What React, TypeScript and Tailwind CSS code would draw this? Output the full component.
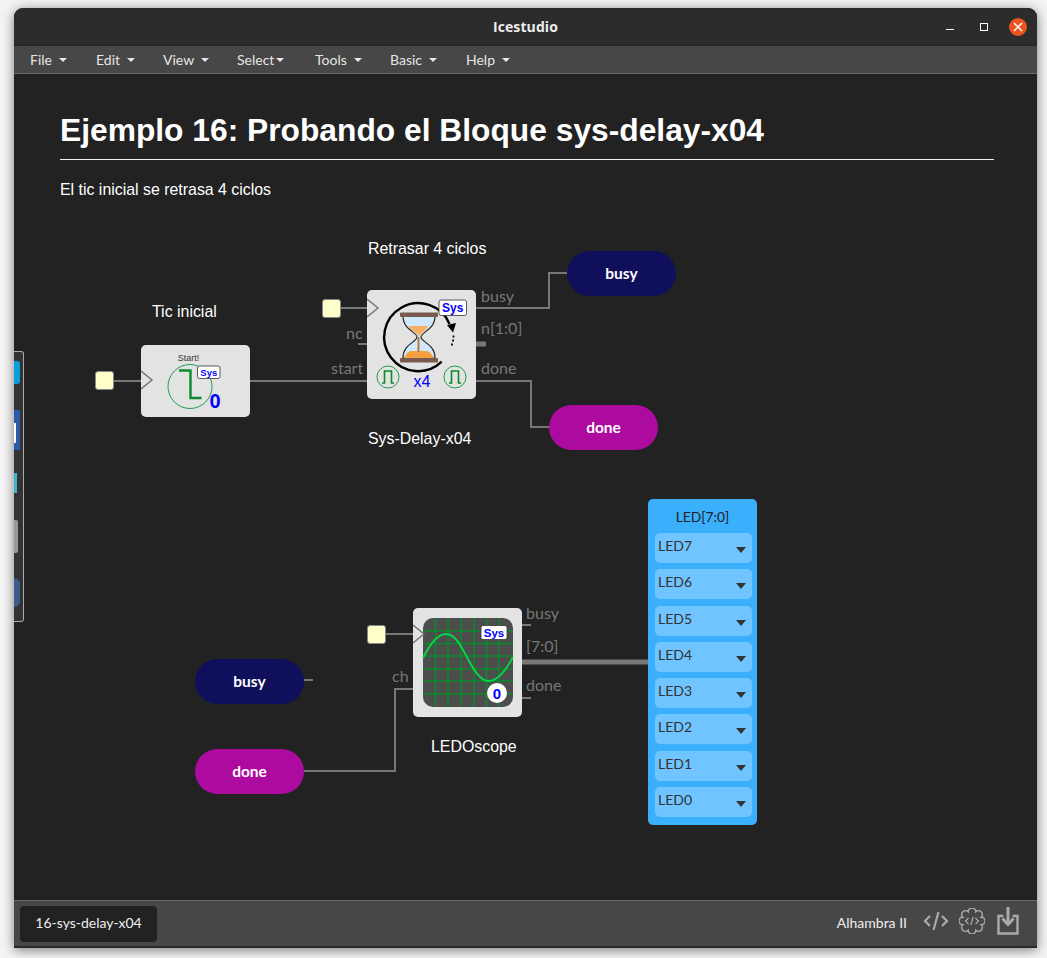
import React from "react";

const sans = "font-['Liberation_Sans',Arial,sans-serif]";
const lato = "font-['Lato',sans-serif]";

function Caret({ tight }: { tight?: boolean }) {
  return (
    <span
      className={`${tight ? "ml-[2px]" : "ml-[7px]"} inline-block w-0 h-0 border-l-[4px] border-r-[4px] border-t-[4px] border-l-transparent border-r-transparent border-t-[#e8e8e8]`}
    />
  );
}

function MenuItem({ label, tight, cls }: { label: string; tight?: boolean; cls: string }) {
  return (
    <div className={`flex items-center ${cls} text-[14px] text-[#e6e6e6]`}>
      <span>{label}</span>
      <Caret tight={tight} />
    </div>
  );
}

function Badge({ x, y, w, h, size }: { x: number; y: number; w: number; h: number; size: number }) {
  return (
    <g>
      <rect x={x} y={y} width={w} height={h} rx="2" fill="#fff" stroke="#333" strokeWidth="0.8" />
      <text x={x + w / 2} y={y + h / 2 + size * 0.36} textAnchor="middle" fontSize={size} fontWeight="700" fontFamily="Liberation Sans" fill="#0000ff">
        Sys
      </text>
    </g>
  );
}

function Pulse({ cx, cy }: { cx: number; cy: number }) {
  return (
    <g fill="none">
      <circle cx={cx} cy={cy} r="11" stroke="#1f9d4d" strokeWidth="1" fill="#e3e3e3" />
      <path d={`M${cx - 6} ${cy + 6}H${cx - 3.5}V${cy - 6}H${cx + 3.5}V${cy + 6}H${cx + 6}`} stroke="#0a8a2a" strokeWidth="1.6" />
    </g>
  );
}

function Clock({ x, y }: { x: number; y: number }) {
  return <path d={`M${x} ${y - 9}L${x + 11} ${y}L${x} ${y + 9}`} fill="none" stroke="#777" strokeWidth="1.5" />;
}

function DelayIcon() {
  return (
    <svg width="109" height="109" viewBox="367 290 109 109">
      <Clock x={367} y={308} />
      <path d="M441.700 361.700A34 34 0 1 1 449.500 324" fill="none" stroke="#000" strokeWidth="2.400" />
      <path d="M447 325L456 323L453 332.500Z" fill="#000" />
      <path d="M453.500 335.500v2M453 339.500v2M452 343.500v2" stroke="#000" strokeWidth="1.800" fill="none" />
      <path d="M403 316C403 330 417 332 417 337C417 342 403 344 403 358H435C435 344 421 342 421 337C421 332 435 330 435 316Z" fill="#cfe8fb" stroke="#222" strokeWidth="1.2" />
      <path d="M409 326H428C426 331 421 333 419 336C417 333 411 331 409 326Z" fill="#f8b060" />
      <path d="M404.500 358C405 355 408 352 410 351H427C430 352 433 355 433.500 358Z" fill="#f8a040" />
      <rect x="417.500" y="337" width="2" height="15" fill="#b97a35" />
      <rect x="400" y="312.500" width="38" height="4.500" rx="1" fill="#7a5a50" />
      <rect x="400" y="358" width="38" height="4.500" rx="1" fill="#7a5a50" />
      <Badge x={439} y={300} w={27.500} h={15.500} size={12} />
      <Pulse cx={388} cy={377} />
      <Pulse cx={455} cy={377} />
      <text x="422" y="386.500" textAnchor="middle" fontSize="16" fontFamily="Liberation Sans" fill="#0000ff">
        x4
      </text>
    </svg>
  );
}

function StartIcon() {
  return (
    <svg width="109" height="72" viewBox="141 345 109 72">
      <Clock x={141} y={380} />
      <text x="188.500" y="361" textAnchor="middle" fontSize="9" fontFamily="Liberation Sans" fill="#333">
        Start!
      </text>
      <circle cx="190" cy="386.500" r="22" fill="none" stroke="#1f9d4d" strokeWidth="1" />
      <path d="M179 370.500H190.500V398H201.500" fill="none" stroke="#0a8a2a" strokeWidth="2.400" />
      <Badge x={197.500} y={366} w={22.500} h={12.500} size={9.500} />
      <text x="215" y="407.500" textAnchor="middle" fontSize="20" fontWeight="700" fontFamily="Liberation Sans" fill="#0000ff">
        0
      </text>
    </svg>
  );
}

function ScopeIcon() {
  const vs = [435.5, 448, 461, 474, 486.5, 499];
  const hs = [631, 643.5, 656, 669, 681, 694];
  return (
    <svg width="109" height="109" viewBox="413 608 109 109">
      <rect x="423" y="618" width="90" height="89" rx="10" fill="#4d4d4d" />
      {vs.map((x) => (
        <path key={x} d={`M${x} 618V707`} stroke="#0a8a2a" strokeWidth="1.500" />
      ))}
      {hs.map((y) => (
        <path key={y} d={`M423 ${y}H513`} stroke="#0a8a2a" strokeWidth="1.500" />
      ))}
      <path d="M423 658C431 642 439 634 446 634C456 634 462 648 469 661C475 672 481 681 489 681C497 681 505 672 513 657" fill="none" stroke="#00dd44" strokeWidth="1.800" />
      <Clock x={413} y={634} />
      <Badge x={481} y={625.500} w={26} h={14} size={11.500} />
      <circle cx="497" cy="693" r="10" fill="#fff" />
      <text x="497" y="698.500" textAnchor="middle" fontSize="15" fontWeight="700" fontFamily="Liberation Sans" fill="#0000ff">
        0
      </text>
    </svg>
  );
}

function Wires() {
  return (
    <svg className="absolute left-0 top-0" width="1023" height="826" viewBox="14 74 1023 826" fill="none" stroke="#777" strokeWidth="2">
      <path d="M114 381H141" />
      <path d="M250 381H367" />
      <path d="M341 308H367" />
      <path d="M358 344H367" />
      <path d="M476 344H486" strokeWidth="5" />
      <path d="M476 308H549V273H567" />
      <path d="M476 381H531V427H549" />
      <path d="M386 634H413" />
      <path d="M304 771H395V689H413" />
      <path d="M304 680H313" />
      <path d="M522 625H531" />
      <path d="M522 698H531" />
      <path d="M522 662H648" strokeWidth="5" />
    </svg>
  );
}

function Wl({ cls, children }: { cls: string; children: React.ReactNode }) {
  return <span className={`absolute ${cls} ${lato} text-[16px] leading-[18px] text-[#777]`}>{children}</span>;
}

function Cap({ cls, children }: { cls: string; children: React.ReactNode }) {
  return <span className={`absolute ${cls} ${sans} text-[15.900px] leading-[18px] text-white`}>{children}</span>;
}

function Pill({ cls, children }: { cls: string; children: React.ReactNode }) {
  return (
    <div className={`absolute ${cls} ${lato} w-[109px] h-[45px] rounded-[23px] flex items-center justify-center text-[15.5px] font-bold text-white`}>
      {children}
    </div>
  );
}

function Const({ cls }: { cls: string }) {
  return <div className={`absolute ${cls} w-[19px] h-[19px] rounded-[3px] bg-[#ffffcc] border border-[#888]`} />;
}

function LedRow({ name }: { name: string }) {
  return (
    <div className="relative h-[30px] rounded-[5px] bg-[#70c4ff] pl-[3px] pt-[3px] text-[14px] leading-[20px] text-[#333]">
      {name}
      <span className="absolute right-[6px] top-[14px] w-0 h-0 border-l-[5px] border-r-[5px] border-t-[6px] border-l-transparent border-r-transparent border-t-[#333]" />
    </div>
  );
}

function Dock() {
  return (
    <div className="absolute left-0 top-[277px] w-[10px] h-[271px] rounded-r-[3px] bg-[#333] border border-l-0 border-[#aaa] overflow-hidden">
      <div className="absolute left-0 top-[9px] w-[6px] h-[23px] rounded-r-[3px] bg-[#0a9fdc]" />
      <div className="absolute left-0 top-[58px] w-[6px] h-[40px] bg-[#2b5aa8]">
        <div className="mt-[13px] w-[2px] h-[20px] bg-white" />
      </div>
      <div className="absolute left-0 top-[121px] w-[3px] h-[20px] bg-[#3db4cc]" />
      <div className="absolute left-0 top-[168px] w-[4px] h-[33px] rounded-r-[2px] bg-[#999]" />
      <div className="absolute left-0 top-[226px] w-[6px] h-[29px] rounded-r-[6px] bg-[#3d5c8c]" />
    </div>
  );
}

export default function App() {
  const leds = ["LED7", "LED6", "LED5", "LED4", "LED3", "LED2", "LED1", "LED0"];
  return (
    <div className={`w-[1047px] h-[958px] bg-[#f4f4f4] pl-[14px] pt-[8px] ${lato}`}>
      <div className="relative w-[1023px] h-[940px] rounded-t-[9px] overflow-hidden flex flex-col bg-[#222] shadow-[0_2px_12px_rgba(0,0,0,0.5)]">
        <div className="h-[38px] shrink-0 bg-[#2c2c2c] border-b border-[#242424] flex items-center justify-center relative">
          <span className="font-['Open_Sans',sans-serif] font-bold text-[14px] text-[#eee] tracking-[0.1px]">Icestudio</span>
          <div className="absolute left-[932px] top-[21px] w-[8px] h-[1px] bg-white" />
          <div className="absolute left-[966px] top-[15px] w-[8px] h-[8px] border border-white" />
          <div className="absolute left-[995px] top-[10px] w-[18px] h-[18px] rounded-full bg-[#e95420] flex items-center justify-center">
            <svg width="10" height="10" viewBox="0 0 10 10" stroke="#fff" strokeWidth="1.500">
              <path d="M1 1L9 9M9 1L1 9" />
            </svg>
          </div>
        </div>
        <div className="h-[28px] shrink-0 bg-[#474747] border-b border-[#666] flex items-center pl-[16px]">
          <MenuItem label="File" cls="w-[66px]" />
          <MenuItem label="Edit" cls="w-[67px]" />
          <MenuItem label="View" cls="w-[74px]" />
          <MenuItem label="Select" tight cls="w-[78px]" />
          <MenuItem label="Tools" cls="w-[75px]" />
          <MenuItem label="Basic" cls="w-[76px]" />
          <MenuItem label="Help" cls="w-[76px]" />
        </div>
        <div className={`relative flex-1 bg-[#222] px-[46px] ${sans}`}>
          <h1 className="mt-[38px] text-[31.750px] leading-[37px] font-bold text-white">Ejemplo 16: Probando el Bloque sys-delay-x04</h1>
          <div className="mt-[10px] w-[934px] h-px bg-[#eee]" />
          <p className="mt-[21px] text-[15.900px] leading-[18px] text-white">El tic inicial se retrasa 4 ciclos</p>

          <Wires />

          <Cap cls="left-[138px] top-[229px]">Tic inicial</Cap>
          <Cap cls="left-[354px] top-[166px]">Retrasar 4 ciclos</Cap>
          <Cap cls="left-[354px] top-[356px]">Sys-Delay-x04</Cap>
          <Cap cls="left-[417px] top-[664px]">LEDOscope</Cap>

          <Const cls="left-[81px] top-[297px]" />
          <Const cls="left-[308px] top-[225px]" />
          <Const cls="left-[353px] top-[551px]" />

          <div className="absolute left-[127px] top-[271px] w-[109px] h-[72px] rounded-[5px] bg-[#e3e3e3]">
            <StartIcon />
          </div>
          <div className="absolute left-[353px] top-[216px] w-[109px] h-[109px] rounded-[5px] bg-[#e3e3e3]">
            <DelayIcon />
          </div>
          <div className="absolute left-[399px] top-[534px] w-[109px] h-[109px] rounded-[5px] bg-[#e3e3e3]">
            <ScopeIcon />
          </div>

          <Wl cls="left-[467px] top-[213px]">busy</Wl>
          <Wl cls="left-[467px] top-[245px]">n[1:0]</Wl>
          <Wl cls="left-[467px] top-[285px]">done</Wl>
          <Wl cls="left-[332px] top-[250px]">nc</Wl>
          <Wl cls="left-[317px] top-[285px]">start</Wl>
          <Wl cls="left-[512px] top-[530px]">busy</Wl>
          <Wl cls="left-[512px] top-[563px]">[7:0]</Wl>
          <Wl cls="left-[512px] top-[602px]">done</Wl>
          <Wl cls="left-[378px] top-[593px]">ch</Wl>

          <Pill cls="left-[553px] top-[177px] bg-[#0f0f5c]">busy</Pill>
          <Pill cls="left-[535px] top-[331px] bg-[#ad0aa0]">done</Pill>
          <Pill cls="left-[181px] top-[585px] bg-[#0f0f5c]">busy</Pill>
          <Pill cls="left-[181px] top-[675px] bg-[#ad0aa0]">done</Pill>

          <div className={`absolute left-[634px] top-[425px] w-[109px] h-[326px] rounded-[5px] bg-[#3ab0fc] pl-[7px] pr-[5px] ${lato}`}>
            <div className="h-[34px] pt-[9px] pr-[2px] text-center text-[13.800px] leading-[18px] text-[#222]">LED[7:0]</div>
            <div className="flex flex-col gap-[6.300px]">
              {leds.map((l) => (
                <LedRow key={l} name={l} />
              ))}
            </div>
          </div>
          <Dock />
        </div>
        <div className="h-[48px] shrink-0 bg-[#474747] border-t border-[#666] border-b-2 border-b-[#2a2a2a] flex items-center justify-between pl-[6px] pr-[18px]">
          <div className="w-[137px] h-[36px] pb-[2px] rounded-[4px] bg-[#222] flex items-center justify-center text-[14px] text-[#eee]">16-sys-delay-x04</div>
          <div className="flex items-center">
            <span className="mr-[16px] mb-[2px] text-[14px] text-[#eee]">Alhambra II</span>
            <svg className="mr-[10px] mb-[5px]" width="26" height="20" viewBox="0 0 26 20" fill="none" stroke="#aaa" strokeWidth="2.200">
              <path d="M7 5L2 10L7 15M19 5L24 10L19 15M15.500 1L10.500 19" />
            </svg>
            <svg className="mr-[12px] mb-[5px]" width="26" height="26" viewBox="0 0 26 26" fill="none" stroke="#aaa" strokeWidth="1.500">
              <path d="M9.200 3.800A3.800 3.800 0 0 1 16.800 3.800A3.800 3.800 0 0 1 22.200 9.200A3.800 3.800 0 0 1 22.200 16.800A3.800 3.800 0 0 1 16.800 22.200A3.800 3.800 0 0 1 9.200 22.200A3.800 3.800 0 0 1 3.800 16.800A3.800 3.800 0 0 1 3.800 9.200A3.800 3.800 0 0 1 9.200 3.800Z" />
              <path d="M9.500 10L6.500 13L9.500 16M16.500 10L19.500 13L16.500 16M14.200 9L11.800 17" strokeWidth="1.200" />
            </svg>
            <svg className="mb-[5px]" width="22" height="28" viewBox="0 0 22 28" fill="none" stroke="#aaa" strokeWidth="2.400">
              <path d="M6.500 9H1.500V26.500H20.500V9H15.500" />
              <path d="M11 0V16" strokeWidth="3" />
              <path d="M5.500 11.500L11 17.500L16.500 11.500" strokeWidth="3" />
            </svg>
          </div>
        </div>
      </div>
    </div>
  );
}
